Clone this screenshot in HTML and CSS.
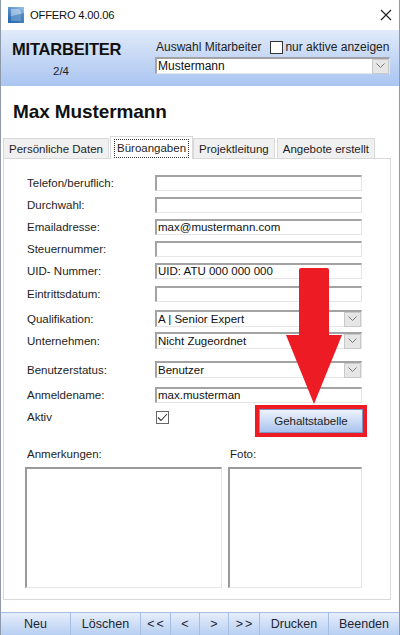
FILE: index.html
```html
<!DOCTYPE html>
<html lang="de">
<head>
  <meta charset="UTF-8">
  <title>OFFERO 4.00.06</title>
  <link rel="stylesheet" href="styles.css">
</head>
<body>

  <div class="window">

    <!-- Titelleiste -->
    <div class="titlebar">
      <svg class="app-icon" width="16" height="16" viewBox="0 0 16 16">
        <defs>
          <linearGradient id="ig" x1="0" y1="1" x2="1" y2="0">
            <stop offset="0" stop-color="#1d5fa8"/>
            <stop offset="1" stop-color="#9cc3e6"/>
          </linearGradient>
        </defs>
        <rect x="0" y="0" width="16" height="16" fill="url(#ig)"/>
        <polygon points="3,2 11,2 13,5 13,14 3,14" fill="#cfe3f5" opacity="0.55"/>
        <polygon points="0,10 16,6 16,16 0,16" fill="#2b6cb3" opacity="0.5"/>
      </svg>
      <span class="app-title">OFFERO 4.00.06</span>
      <svg class="close" width="12" height="12" viewBox="0 0 12 12">
        <path d="M1 1 L11 11 M11 1 L1 11" stroke="#222" stroke-width="1.2"/>
      </svg>
    </div>

    <!-- Kopfbereich -->
    <div class="header">
      <div class="header-left">
        <div class="module">MITARBEITER</div>
        <div class="counter">2/4</div>
      </div>
      <div class="header-right">
        <div class="pick-row">
          <span>Auswahl Mitarbeiter</span>
          <span class="check"></span>
          <span>nur aktive anzeigen</span>
        </div>
        <div class="combo combo-wide">
          <span class="combo-value">Mustermann</span>
          <span class="combo-btn"><svg width="9" height="6" viewBox="0 0 9 6"><path d="M0.5 0.5 L4.5 4.5 L8.5 0.5" fill="none" stroke="#777" stroke-width="1"/></svg></span>
        </div>
      </div>
    </div>

    <div class="main">
      <h1 class="person">Max Mustermann</h1>

      <div class="tabs">
        <div class="tab">Persönliche Daten</div>
        <div class="tab active"><span class="focus">Büroangaben</span></div>
        <div class="tab">Projektleitung</div>
        <div class="tab">Angebote erstellt</div>
      </div>

      <div class="panel">
        <div class="row first">
          <label>Telefon/beruflich:</label>
          <div class="field"></div>
        </div>
        <div class="row">
          <label>Durchwahl:</label>
          <div class="field"></div>
        </div>
        <div class="row">
          <label>Emailadresse:</label>
          <div class="field">max@mustermann.com</div>
        </div>
        <div class="row">
          <label>Steuernummer:</label>
          <div class="field"></div>
        </div>
        <div class="row">
          <label>UID- Nummer:</label>
          <div class="field">UID: ATU 000 000 000</div>
        </div>
        <div class="row gap7">
          <label>Eintrittsdatum:</label>
          <div class="field"></div>
        </div>
        <div class="row gap8 tall">
          <label>Qualifikation:</label>
          <div class="combo">
            <span class="combo-value">A | Senior Expert</span>
            <span class="combo-btn"><svg width="9" height="6" viewBox="0 0 9 6"><path d="M0.5 0.5 L4.5 4.5 L8.5 0.5" fill="none" stroke="#777" stroke-width="1"/></svg></span>
          </div>
        </div>
        <div class="row gap5 tall">
          <label>Unternehmen:</label>
          <div class="combo">
            <span class="combo-value">Nicht Zugeordnet</span>
            <span class="combo-btn"><svg width="9" height="6" viewBox="0 0 9 6"><path d="M0.5 0.5 L4.5 4.5 L8.5 0.5" fill="none" stroke="#777" stroke-width="1"/></svg></span>
          </div>
        </div>
        <div class="row gap12 tall">
          <label>Benutzerstatus:</label>
          <div class="combo">
            <span class="combo-value">Benutzer</span>
            <span class="combo-btn"><svg width="9" height="6" viewBox="0 0 9 6"><path d="M0.5 0.5 L4.5 4.5 L8.5 0.5" fill="none" stroke="#777" stroke-width="1"/></svg></span>
          </div>
        </div>
        <div class="row gap9">
          <label>Anmeldename:</label>
          <div class="field">max.musterman</div>
        </div>
        <div class="row">
          <label>Aktiv</label>
          <span class="check checked"><svg width="11" height="9" viewBox="0 0 11 9"><path d="M1 4.5 L4 7.5 L10 1" fill="none" stroke="#333" stroke-width="1.1"/></svg></span>
          <div class="mark">
            <button class="btn-blue">Gehaltstabelle</button>
          </div>
        </div>

        <div class="notes">
          <div class="note-col wide">
            <div class="note-label">Anmerkungen:</div>
            <div class="box"></div>
          </div>
          <div class="note-col">
            <div class="note-label">Foto:</div>
            <div class="box"></div>
          </div>
        </div>
      </div>
    </div>

    <!-- Buttonleiste -->
    <div class="toolbar">
      <button class="tb w70">Neu</button>
      <button class="tb w70">Löschen</button>
      <button class="tb w30 nav">&lt;&lt;</button>
      <button class="tb w29">&lt;</button>
      <button class="tb w29">&gt;</button>
      <button class="tb w31 nav">&gt;&gt;</button>
      <button class="tb w69">Drucken</button>
      <button class="tb grow">Beenden</button>
    </div>

    <!-- Hinweispfeil -->
    <svg class="arrow" width="58" height="137" viewBox="0 0 58 137">
      <path d="M16 0 L42 0 Q44 0 44 2 L44 67 L57 67 L29 136 L1 67 L14 67 L14 2 Q14 0 16 0 Z" fill="#ed1c24"/>
    </svg>
  </div>

</body>
</html>
```

FILE: styles.css
```css
* { box-sizing: border-box; }

html, body {
  margin: 0;
  padding: 0;
}

body {
  font-family: "Liberation Sans", Arial, sans-serif;
  font-size: 11.5px;
  color: #1e1e1e;
  background: #fff;
}

.window {
  position: relative;
  width: 400px;
  height: 635px;
  display: flex;
  flex-direction: column;
  border-left: 1px solid #8e9aaa;
  border-right: 1px solid #8e9aaa;
  background: #fff;
  overflow: hidden;
}

/* title bar */
.titlebar {
  height: 30px;
  display: flex;
  align-items: center;
  padding-left: 7px;
  background: #fff;
}

.app-icon { margin-top: -1px; }

.app-title {
  margin-left: 6px;
  font-size: 11.2px;
  letter-spacing: -0.2px;
  color: #111;
}

.close {
  margin-left: auto;
  margin-right: 7px;
}

/* header */
.header {
  height: 56px;
  display: flex;
  background: linear-gradient(#e0eaf9, #aac5f1);
}

.header-left {
  width: 154px;
  padding: 10px 0 0 11px;
}

.module {
  font-weight: bold;
  font-size: 16.5px;
  letter-spacing: -0.2px;
  color: #111;
  line-height: 19px;
}

.counter {
  margin: 5px 0 0 41px;
  font-size: 11.5px;
  line-height: 14px;
}

.header-right {
  padding-top: 9px;
}

.pick-row {
  display: flex;
  align-items: center;
  height: 16px;
  font-size: 12px;
  color: #222;
  padding-left: 1px;
}

.pick-row .check {
  margin: 0 2px 0 9px;
  background: #fff;
  border-color: #333;
}

.check {
  width: 13px;
  height: 13px;
  border: 1px solid #555;
  display: inline-flex;
  align-items: center;
  justify-content: center;
  flex: none;
}

.check.checked {
  border-color: #666;
  margin-left: 1px;
}

/* inputs */
.field, .combo {
  width: 207px;
  height: 16px;
  background: #fff;
  border: 1px solid #e6e6e6;
  border-top: 2px solid #a3a3a3;
  border-left: 2px solid #a3a3a3;
  padding-left: 1px;
  font-size: 11.5px;
  line-height: 13px;
  color: #111;
  white-space: nowrap;
  flex: none;
}

.combo {
  display: flex;
  align-items: center;
  height: 17px;
}

.combo-value { flex: 1; }

.combo-btn {
  width: 17px;
  height: 15px;
  background: #e6e6e6;
  border: 1px solid #c9c9c9;
  display: flex;
  align-items: center;
  justify-content: center;
}

.combo-wide {
  width: 235px;
  margin-top: 2px;
  font-size: 12px;
}

/* main */
.main {
  flex: 1;
  display: flex;
  flex-direction: column;
}

.person {
  margin: 16px 0 13px 12px;
  font-size: 19px;
  line-height: 20px;
  letter-spacing: -0.1px;
  color: #111;
}

.tabs {
  height: 23px;
  display: flex;
  align-items: flex-end;
  padding-left: 2px;
}

.tab {
  height: 20px;
  padding: 0 5px;
  margin-right: 2px;
  background: #f0f0f0;
  border: 1px solid #d9d9d9;
  border-bottom: none;
  display: flex;
  align-items: center;
  font-size: 11.5px;
  color: #1e1e1e;
}

.tab.active {
  height: 23px;
  background: #fff;
  margin: 0 0 -1px -1px;
  padding: 2px 3px 0;
  position: relative;
  z-index: 1;
  align-items: flex-start;
}

.focus {
  border: 1px dotted #333;
  padding: 1px 2px 2px;
  line-height: 14px;
}

.panel {
  height: 442px;
  width: 388px;
  margin-left: 2px;
  border: 1px solid #d9d9d9;
  background: #fff;
  padding: 16px 28px 0 21px;
}

.row {
  display: flex;
  align-items: center;
  height: 16px;
  margin-top: 6px;
  padding-left: 2px;
}

.row.first { margin-top: 0; }
.row.tall { height: 17px; }
.row.gap5 { margin-top: 5px; }
.row.gap7 { margin-top: 7px; }
.row.gap8 { margin-top: 8px; }
.row.gap9 { margin-top: 9px; }
.row.gap12 { margin-top: 12px; }

.row label {
  width: 128px;
  flex: none;
}

.mark {
  margin-left: auto;
  margin-right: -5px;
  align-self: flex-start;
  margin-top: -4px;
  width: 112px;
  height: 32px;
  border: 4px solid #ed1c24;
  flex: none;
}

.btn-blue {
  width: 100%;
  height: 100%;
  border: 1px solid #7c97c6;
  background: linear-gradient(#edf3fc, #a9c4ef);
  font-family: "Liberation Sans", Arial, sans-serif;
  font-size: 11.5px;
  color: #222;
  padding: 0;
}

/* notes */
.notes {
  display: flex;
  gap: 6px;
  margin-top: 22px;
}

.note-col { width: 134px; }
.note-col.wide { width: 197px; }

.note-label {
  height: 14px;
  line-height: 14px;
  padding-left: 2px;
  margin-bottom: 6px;
}

.box {
  height: 121px;
  border: 1px solid #e6e6e6;
  border-top: 2px solid #9a9a9a;
  border-left: 2px solid #9a9a9a;
  background: #fff;
}

/* toolbar */
.toolbar {
  height: 23px;
  margin-top: 12px;
  display: flex;
  border-top: 1px solid #a6bde2;
}

.tb {
  height: 22px;
  border: none;
  border-right: 1px solid #a6bde2;
  background: linear-gradient(#e6eefb, #b8cff2);
  font-family: "Liberation Sans", Arial, sans-serif;
  font-size: 12.5px;
  color: #1d2530;
  padding: 0;
}

.tb.nav {
  letter-spacing: 2px;
  text-indent: 2px;
}

.w70 { width: 70px; }
.w69 { width: 69px; }
.w30 { width: 30px; }
.w29 { width: 29px; }
.w31 { width: 31px; }
.grow { flex: 1; border-right: none; }

.arrow {
  position: absolute;
  left: 284px;
  top: 268px;
}
```
